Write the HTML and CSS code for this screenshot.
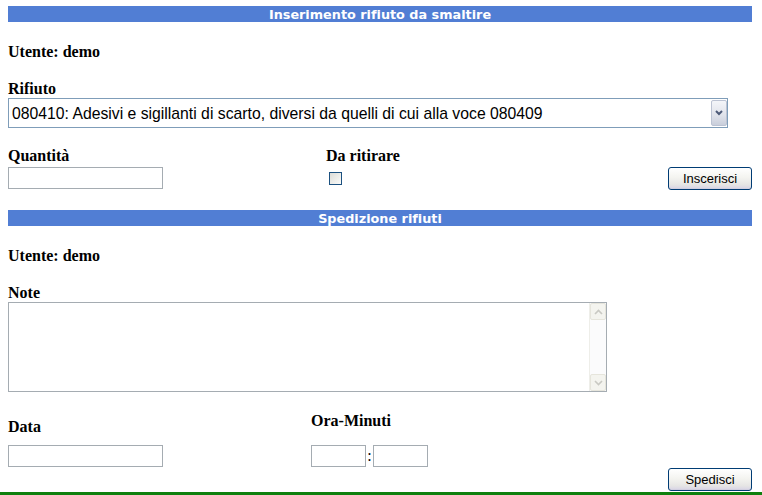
FILE: index.html
```html
<!DOCTYPE html>
<html lang="it">
<head>
<meta charset="utf-8">
<title>Inserimento rifiuto</title>
<link rel="stylesheet" href="styles.css">
</head>
<body>
<div class="page">
  <div class="bar">Inserimento rifiuto da smaltire</div>
  <div class="lbl user-a">Utente: demo</div>
  <div class="lbl rif">Rifiuto</div>
  <div class="selwrap">
    <select class="sel">
      <option>080410: Adesivi e sigillanti di scarto, diversi da quelli di cui alla voce 080409</option>
    </select>
    <span class="selbtn"><svg width="8" height="6" viewBox="0 0 8 6"><path d="M1 1 L4 4 L7 1" fill="none" stroke="#4d5a78" stroke-width="2"/></svg></span>
  </div>
  <div class="row1">
    <div class="col">
      <div class="lbl">Quantità</div>
      <input class="txt w155" type="text">
    </div>
    <div class="col">
      <div class="lbl">Da ritirare</div>
      <span class="chk"></span>
    </div>
    <div class="col end">
      <button class="btn btn-ins" type="button">Inscerisci</button>
    </div>
  </div>
  <div class="bar bar2">Spedizione rifiuti</div>
  <div class="lbl user-b">Utente: demo</div>
  <div class="lbl note">Note</div>
  <div class="tawrap">
    <textarea class="ta"></textarea>
    <div class="sb">
      <span class="sbbtn"><svg width="9" height="6" viewBox="0 0 9 6"><path d="M1 5 L4.5 1.5 L8 5" fill="none" stroke="#c9c9c3" stroke-width="1.6"/></svg></span>
      <span class="sbtrack"></span>
      <span class="sbbtn"><svg width="9" height="6" viewBox="0 0 9 6"><path d="M1 1 L4.5 4.5 L8 1" fill="none" stroke="#c9c9c3" stroke-width="1.6"/></svg></span>
    </div>
  </div>
  <div class="row2">
    <div class="col">
      <div class="lbl data">Data</div>
      <input class="txt w155 data-in" type="text">
    </div>
    <div class="col">
      <div class="lbl ora">Ora-Minuti</div>
      <div class="time">
        <input class="txt w55" type="text"><span class="colon">:</span><input class="txt w55" type="text">
      </div>
    </div>
    <div class="col end">
      <button class="btn btn-sped" type="button">Spedisci</button>
    </div>
  </div>
</div>
<div class="footer"></div>
</body>
</html>
```

FILE: styles.css
```css
html, body {
  margin: 0;
  padding: 0;
  background: #fff;
}
body {
  font-family: "Liberation Serif", "Times New Roman", serif;
  color: #000;
  overflow: hidden;
}
.page {
  margin-left: 8px;
  width: 744px;
  padding-top: 6px;
}
.bar {
  height: 16px;
  line-height: 17px;
  background: #517ed4;
  color: #fff;
  font-family: "DejaVu Sans", Verdana, sans-serif;
  font-weight: bold;
  font-size: 12.8px;
  font-variant-ligatures: none;
  text-align: center;
  overflow: hidden;
}
.lbl {
  font-weight: bold;
  font-size: 16px;
  line-height: 18px;
  height: 18px;
  white-space: nowrap;
}
.user-a { margin-top: 21px; }
.rif { margin-top: 19px; }
.selwrap {
  position: relative;
  width: 720px;
  height: 30px;
}
.sel {
  -webkit-appearance: none;
  appearance: none;
  box-sizing: border-box;
  width: 720px;
  height: 30px;
  margin: 0;
  border: 1px solid #7f9db9;
  border-radius: 0;
  background: #fff;
  color: #000;
  font-family: "Liberation Sans", Arial, sans-serif;
  font-size: 15.75px;
  padding: 0 20px 0 3px;
  outline: none;
}
.selbtn {
  position: absolute;
  top: 2px;
  bottom: 2px;
  right: 1px;
  width: 16px;
  box-sizing: border-box;
  border: 1px solid #bcc3d3;
  border-radius: 2px;
  background: linear-gradient(#f4f5f9, #dfe2ea 60%, #c9cedb);
  display: flex;
  align-items: center;
  justify-content: center;
  pointer-events: none;
}
.row1 {
  margin-top: 19px;
  display: grid;
  grid-template-columns: 318px 1fr 84px;
  height: 43px;
}
.col {
  display: flex;
  flex-direction: column;
  align-items: flex-start;
}
.txt {
  box-sizing: border-box;
  height: 22px;
  margin: 0;
  border: 1px solid #a5acb2;
  background: #fff;
  padding: 0 2px;
  font-family: "Liberation Sans", Arial, sans-serif;
  font-size: 13px;
  outline: none;
}
.w155 { width: 155px; }
.w55 { width: 55px; }
.row1 .txt { margin-top: 2px; }
.chk {
  display: block;
  box-sizing: border-box;
  width: 13px;
  height: 13px;
  margin: 7px 0 0 3px;
  border: 1px solid #1c5180;
  background: linear-gradient(135deg, #dcdcd7, #fbfbf9);
}
.btn {
  box-sizing: border-box;
  width: 84px;
  height: 23px;
  margin: 0;
  padding: 0;
  border: 1px solid #003c74;
  border-radius: 3px;
  background: linear-gradient(#ffffff, #f4f4f0 45%, #e6e5e4 80%, #d7d3e6);
  color: #000;
  font-family: "Liberation Sans", Arial, sans-serif;
  font-size: 13px;
  box-shadow: inset 0 -1px 0 #d2cfe0;
}
.btn-ins { margin-top: 20px; }
.bar2 { margin-top: 20px; }
.user-b { margin-top: 21px; }
.note { margin-top: 19px; }
.tawrap {
  display: flex;
  box-sizing: border-box;
  width: 599px;
  height: 90px;
  border: 1px solid #a5acb2;
  background: #fff;
}
.ta {
  flex: 1;
  border: none;
  margin: 0;
  padding: 2px;
  resize: none;
  outline: none;
  overflow: hidden;
  font-family: "Liberation Sans", Arial, sans-serif;
  font-size: 13px;
}
.sb {
  width: 17px;
  display: flex;
  flex-direction: column;
  background: #fbfbfc;
  border-left: 1px solid #eeeee9;
  box-sizing: border-box;
}
.sbbtn {
  box-sizing: border-box;
  height: 17px;
  width: 16px;
  border: 1px solid #e6e5dc;
  border-radius: 2px;
  background: #f4f4ef;
  display: flex;
  align-items: center;
  justify-content: center;
}
.sbtrack { flex: 1; }
.row2 {
  display: grid;
  grid-template-columns: 303px 1fr 84px;
  height: 100px;
}
.data { margin-top: 26px; }
.data-in { margin-top: 9px; }
.ora { margin-top: 20px; }
.time {
  display: flex;
  margin-top: 15px;
}
.colon {
  width: 7px;
  text-align: center;
  font-size: 16px;
  line-height: 22px;
}
.btn-sped { margin-top: 76px; }
.footer {
  height: 3px;
  background: #0e800e;
}
```
